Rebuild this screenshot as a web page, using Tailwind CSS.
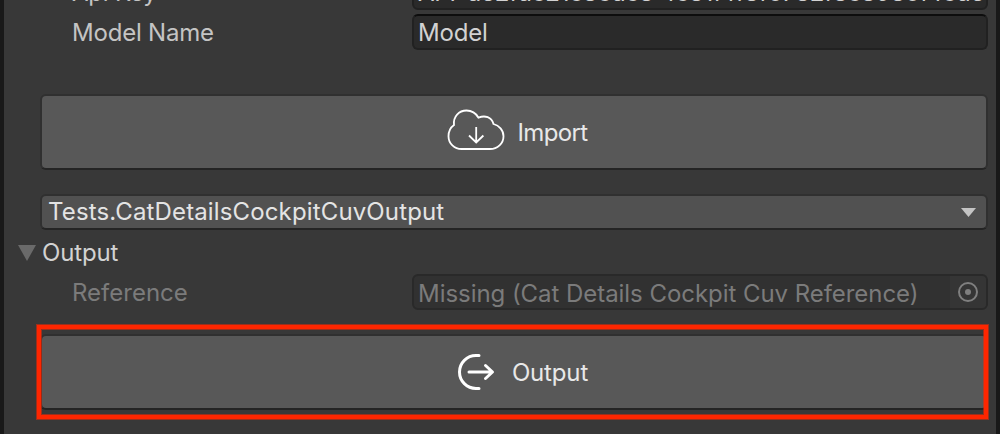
<!DOCTYPE html>
<html lang="en">
<head>
<meta charset="utf-8">
<title>Inspector</title>
<script src="https://cdn.jsdelivr.net/npm/@tailwindcss/browser@4"></script>
</head>
<body class="h-[434px] w-[1000px] overflow-hidden bg-[#383838] font-['Inter',sans-serif] text-[24px] leading-[38px] text-[#c4c4c4]">
<main class="relative flex h-[434px] flex-col overflow-hidden border-x-4 border-[#191919]">
  <div class="flex h-[10px] items-end pr-2 pl-[68px]">
    <div class="h-9 w-[340px] shrink-0 tracking-[-0.2px]"><span>Api Key</span></div>
    <div class="h-9 flex-1 overflow-hidden rounded-[6px] border-2 border-[#212121] bg-[#2a2a2a] pl-1 leading-[34px] tracking-[-0.2px] whitespace-nowrap text-[#d2d2d2]">API-de2fdc21c8cdc8 4c81f4f8f0782f8c8980f4cdef</div>
  </div>
  <div class="mt-1 flex h-9 pr-2 pl-[68px]">
    <div class="w-[340px] shrink-0 tracking-[-0.2px]"><span>Model Name</span></div>
    <div class="flex-1 rounded-[6px] border-2 border-[#212121] border-t-[#0d0d0d] bg-[#2a2a2a] pl-1 leading-[34px] tracking-[-0.2px] text-[#d2d2d2]"><span>Model</span></div>
  </div>
  <button class="mt-11 mr-2 ml-9 flex h-[76px] items-center justify-center gap-[13px] rounded-[6px] border-2 border-[#303030] border-b-[#242424] bg-[#585858] pl-[6px] text-[#e8e8e8]">
    <svg class="mb-[5px] h-[44px] w-[58px]" viewBox="0 0 58 44" fill="none" stroke="#fff" stroke-width="1.8">
      <path d="M14.500 41H43C50.500 41 56.500 35.500 56.500 28.200C56.500 22 52 17.500 46.500 16C44.500 9 38 7 31.500 9.700C28.500 4.500 24.500 2.500 19.500 2.500C12 2.500 6 8.500 7 17C3.500 19.500 1.500 23.500 1.500 28.200C1.500 35.500 7.500 41 14.500 41Z"/>
      <path d="M29.200 19V34.500M22 27.500L29.200 34.500L36.400 27.500"/>
    </svg>
    <span class="pt-[2px] tracking-[-0.65px]">Import</span>
  </button>
  <div class="mt-6 mr-2 ml-9 flex h-9 items-center justify-between rounded-[6px] border-2 border-[#303030] border-b-[#242424] bg-[#515151] pr-[10px] pl-[6px] leading-[32px] text-[#e4e4e4]">
    <span class="tracking-[0.14px]">Tests.CatDetailsCockpitCuvOutput</span>
    <svg class="h-[9px] w-[15px]" viewBox="0 0 15 9"><path d="M0 0H15L7.500 9Z" fill="#c4c4c4"/></svg>
  </div>
  <div class="mt-1 flex h-9 items-center gap-[6px] pl-[14px] text-[#d2d2d2]">
    <svg class="mt-[2px] h-4 w-[18px]" viewBox="0 0 18 16"><path d="M0 0H18L9 16Z" fill="#6a6a6a"/></svg>
    <span class="pt-[2px] tracking-[-0.15px]">Output</span>
  </div>
  <div class="mt-1 flex h-9 pr-2 pl-[68px] text-[#7b7b7b]">
    <div class="w-[340px] shrink-0"><span>Reference</span></div>
    <div class="flex flex-1 justify-between overflow-hidden rounded-[6px] border-2 border-[#292929] bg-[#313131] pl-1 leading-[36px]">
      <span class="tracking-[-0.05px]">Missing (Cat Details Cockpit Cuv Reference)</span>
      <div class="flex w-9 items-center justify-center bg-[#353535]">
        <svg class="h-5 w-5" viewBox="0 0 20 20"><circle cx="10" cy="10" r="9" fill="none" stroke="#7f7f7f" stroke-width="2"/><circle cx="10" cy="10" r="3" fill="#7f7f7f"/></svg>
      </div>
    </div>
  </div>
  <button class="mt-6 mr-2 ml-9 flex h-[76px] items-center justify-center gap-[17px] rounded-[6px] border-2 border-[#303030] border-b-[#242424] bg-[#585858] pl-[17px] text-[#e8e8e8]">
    <svg class="h-[38px] w-[38px]" viewBox="0 0 38 38" fill="none" stroke="#fff" stroke-width="3" stroke-linecap="round" stroke-linejoin="round">
      <path d="M22 2.500H19A16.500 16.500 0 0 0 19 35.500H22M12 19H35M28.500 12.500L35.500 19L28.500 25.500"/>
    </svg>
    <span class="pt-[2px] tracking-[-0.15px]">Output</span>
  </button>
  <div class="pointer-events-none absolute top-[325px] left-[33px] h-[94px] w-[951px] border-4 border-[#fe2600] shadow-[0_0_0_1px_#fe260080,inset_0_0_0_1px_#fe260080]"></div>
</main>
</body>
</html>
